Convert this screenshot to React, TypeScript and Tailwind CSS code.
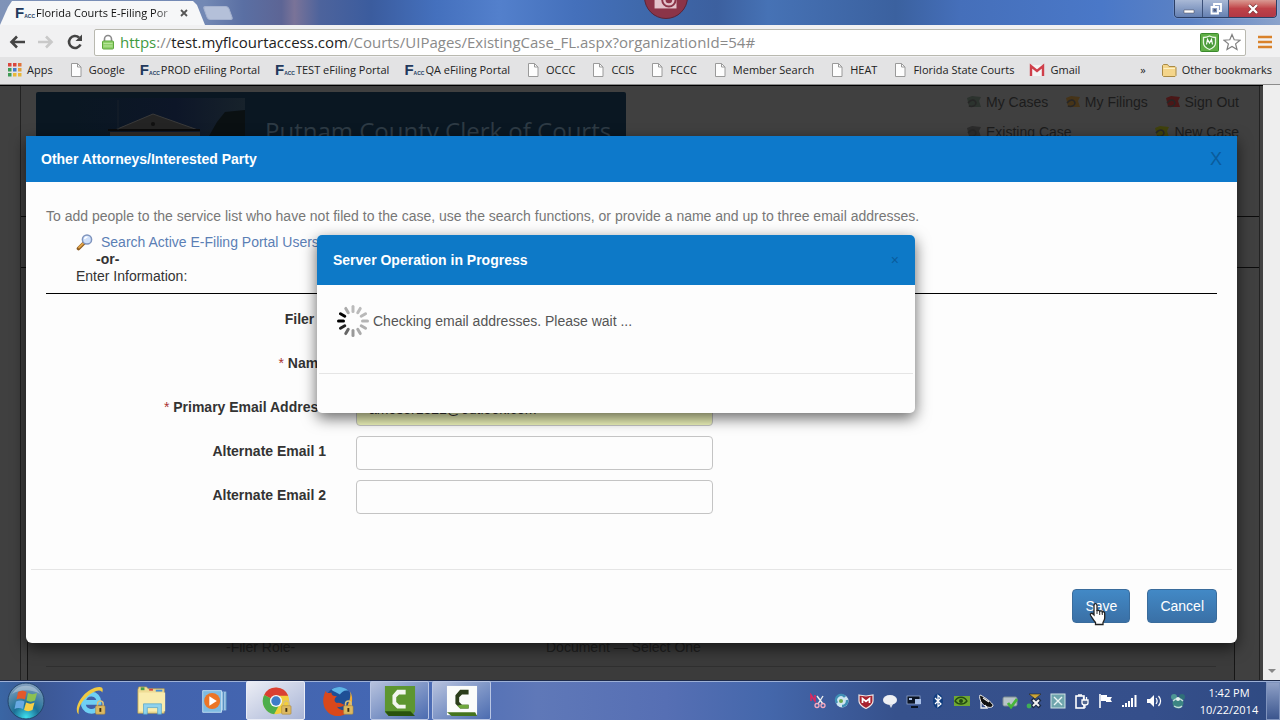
import type { ReactNode } from 'react';

const bookmarks = [
  ['apps', 'Apps'],
  ['file', 'Google'],
  ['facc', 'PROD eFiling Portal'],
  ['facc', 'TEST eFiling Portal'],
  ['facc', 'QA eFiling Portal'],
  ['file', 'OCCC'],
  ['file', 'CCIS'],
  ['file', 'FCCC'],
  ['file', 'Member Search'],
  ['file', 'HEAT'],
  ['file', 'Florida State Courts'],
  ['gmail', 'Gmail'],
];

const appDots = ['#d9453d', '#d9453d', '#e0723a', '#3f9b55', '#4278c9', '#e0a03a', '#3f9b55', '#e8b83a', '#e8b83a'];

function FaccLogo() {
  return (
    <span className="flex w-[21px] shrink-0 items-end font-['Liberation_Sans',sans-serif] font-bold text-[#22395c]">
      <span className="text-[15px] leading-4">F</span>
      <span className="text-[5px] leading-[9px]">ACC</span>
    </span>
  );
}

function BookmarkIcon({ kind }: { kind: string }) {
  if (kind === 'facc') return <FaccLogo />;
  if (kind === 'apps') {
    return (
      <svg className="mr-[5px] size-4 shrink-0" viewBox="0 0 16 16">
        {appDots.map((fill, i) => (
          <rect key={i} x={2 + (i % 3) * 5} y={1 + Math.floor(i / 3) * 5} width="3.500" height="3.500" fill={fill} />
        ))}
      </svg>
    );
  }
  if (kind === 'gmail') {
    return (
      <svg className="mr-[5px] size-4 shrink-0" viewBox="0 0 16 16">
        <path d="M1 3h14v11H1z" fill="#f4f4f4" />
        <path d="M2 14V4l6 5 6-5v10" fill="none" stroke="#cf3f4a" strokeWidth="2.400" />
      </svg>
    );
  }
  if (kind === 'folder') {
    return (
      <svg className="mr-[5px] size-4 shrink-0" viewBox="0 0 16 16">
        <path d="M1.500 13.500V3.500l1-1h4l1.500 2h6l1 1v8l-1 1h-11.500z" fill="#f4d58a" stroke="#a98a45" />
        <path d="M2.500 6.500h11.500" stroke="#fdf0c4" />
      </svg>
    );
  }
  return (
    <svg className="mr-[5px] size-4 shrink-0" viewBox="0 0 16 16">
      <path d="M3.500 1.500h6l3.500 3.500v9.500H3.500z" fill="#fdfdfd" stroke="#9a9a9a" />
      <path d="M9.500 1.500V5H13" fill="none" stroke="#9a9a9a" />
    </svg>
  );
}

function TitleBar() {
  return (
    <header className="relative flex h-[25px] items-end overflow-hidden bg-[linear-gradient(90deg,#7f93b8_0%,#7288b4_16%,#5a6fa3_19%,#5d6595_22%,#7a7398_23%,#4d639c_25%,#3b5c9e_29%,#4470bd_34%,#5380cc_39%,#4470bb_45%,#3f69ac_50%,#3c609f_56%,#4672b5_60%,#3b619f_70%,#456fba_75%,#4a78c8_86%,#5c82c4_93%,#8ba3cb_100%)]">
      <div className="flex h-6 w-[205px] items-center bg-[#f6f7f8] pl-[15px] [clip-path:polygon(0_100%,8px_6px,12px_0,193px_0,197px_4px,100%_100%)]">
        <FaccLogo />
        <span className="w-[140px] whitespace-nowrap bg-[linear-gradient(90deg,#111_85%,#11111130)] bg-clip-text text-[11px] leading-4 text-transparent">
          Florida Courts E-Filing Por
        </span>
        <button aria-label="Close tab" className="ml-1 shrink-0">
          <svg className="size-2" viewBox="0 0 8 8"><path d="M1 1l6 6M7 1L1 7" stroke="#555" strokeWidth="1.800" /></svg>
        </button>
      </div>
      <button aria-label="New tab" className="mb-[5px] h-[14px] w-[26px] skew-x-[20deg] rounded-[3px] border border-[#a5b2cf] bg-[#b4c0d9]" />
      <div className="absolute -top-[25px] left-[52%] size-11 -translate-x-1/2 rounded-full border border-[#5b2437] bg-[#8b3448]">
        <svg className="size-full" viewBox="0 0 44 44">
          <path d="M10 20h23v14H10z" fill="#e3c3cb" />
          <circle cx="25" cy="25" r="7" fill="#e3c3cb" stroke="#8b3448" strokeWidth="2" />
          <circle cx="25" cy="25" r="3.500" fill="#8b3448" />
        </svg>
      </div>
      <div className="ml-auto mr-[3px] flex h-[18px] self-start overflow-hidden rounded-b-[4px] border border-t-0 border-[#2b3f66] text-white shadow-[0_0_1px_#fff]">
        <button aria-label="Minimize" className="flex w-7 items-center justify-center border-r border-[#3b5078] bg-linear-to-b from-[#a9b9d6] to-[#6580b2]">
          <svg className="h-3 w-3" viewBox="0 0 12 12"><path d="M1 7h10v3H1z" fill="#fff" stroke="#445" strokeWidth=".5" /></svg>
        </button>
        <button aria-label="Restore" className="flex w-[26px] items-center justify-center border-r border-[#3b5078] bg-linear-to-b from-[#a9b9d6] to-[#6580b2]">
          <svg className="h-3 w-3" viewBox="0 0 12 12" fill="none"><path d="M4 3V1h7v7H9M1.500 4h6.500v6.500H1.500z" stroke="#fff" strokeWidth="1.800" /><path d="M4 6.500h1.500v1.500H4z" stroke="#334" strokeWidth=".6" /></svg>
        </button>
        <button aria-label="Close" className="flex w-[47px] items-center justify-center bg-linear-to-b from-[#d99a93] via-[#bf4248] to-[#b03844]">
          <svg className="h-3 w-3" viewBox="0 0 12 12"><path d="M2 2l8 8M10 2l-8 8" stroke="#733" strokeWidth="3.500" /><path d="M2 2l8 8M10 2l-8 8" stroke="#fff" strokeWidth="2.400" /></svg>
        </button>
      </div>
    </header>
  );
}

function Toolbar() {
  return (
    <div className="flex h-8 items-center bg-[#f1f1f2] px-2 pt-[2px]">
      <button aria-label="Back" className="mr-[11px]">
        <svg className="size-[18px]" viewBox="0 0 18 18" fill="none" stroke="#444" strokeWidth="2.600"><path d="M17 9H4M9 3.500L3.500 9 9 14.500" /></svg>
      </button>
      <button aria-label="Forward" className="mr-[11px]">
        <svg className="size-[18px]" viewBox="0 0 18 18" fill="none" stroke="#c9c9c9" strokeWidth="2.600"><path d="M1 9h13M9 3.500L14.500 9 9 14.500" /></svg>
      </button>
      <button aria-label="Reload" className="mr-[10px]">
        <svg className="size-[18px]" viewBox="0 0 18 18"><path d="M14.500 11.500A6 6 0 1 1 13 4.500" fill="none" stroke="#444" strokeWidth="2.600" /><path d="M16 1.500v6.500H9.500z" fill="#444" /></svg>
      </button>
      <div className="flex h-[27px] flex-1 items-center rounded-[2px] border border-[#b9b9b0] bg-white pl-[5px] pr-1">
        <svg className="mr-1 h-4 w-4 shrink-0" viewBox="0 0 16 16">
          <path d="M4.500 8V5a3.500 3.500 0 0 1 7 0v3" fill="none" stroke="#8a8a8a" strokeWidth="1.600" />
          <rect x="2.500" y="7" width="11" height="8" rx="1" fill="#8fd06a" stroke="#5da83c" />
          <path d="M3.500 9.500h9M3.500 12h9" stroke="#b7e69b" />
        </svg>
        <span className="whitespace-nowrap text-[15px] leading-5 text-[#8a8a8a]">
          <span className="text-[#3f9a3f]">https</span>://<span className="text-[#222]">test.myflcourtaccess.com</span>/Courts/UIPages/ExistingCase_FL.aspx?organizationId=54#
        </span>
        <svg className="ml-auto size-[19px] shrink-0" viewBox="0 0 19 19">
          <rect x=".5" y=".5" width="18" height="18" rx="1" fill="#5fae45" stroke="#3a8a2c" />
          <path d="M3.500 4.500c2 0 4-.5 6-1.500 2 1 4 1.500 6 1.500V10c0 3-2.500 5-6 6.500C6 15 3.500 13 3.500 10z" fill="#4a9a3a" stroke="#e9f7e4" strokeWidth="1.300" />
          <path d="M6.500 11.500l1-5 2 3.500 2-3.500 1 5" fill="none" stroke="#fff" strokeWidth="1.200" />
        </svg>
        <svg className="ml-1 size-[18px] shrink-0" viewBox="0 0 18 18"><path d="M9 1.500l2.200 5.300 5.800.4-4.400 3.700 1.400 5.600L9 13.500l-5 3 1.400-5.600L1 7.200l5.800-.4z" fill="#fff" stroke="#808080" strokeWidth="1.200" /></svg>
      </div>
      <button aria-label="Menu" className="ml-3">
        <svg className="h-[14px] w-[14px]" viewBox="0 0 14 14"><path d="M0 2h14M0 7h14M0 12h14" stroke="#d9822b" strokeWidth="2.600" /></svg>
      </button>
    </div>
  );
}

function BookmarksBar() {
  return (
    <nav className="flex h-7 items-center gap-[15px] whitespace-nowrap border-b border-[#8c8c8c] bg-[#e3e3e4] pb-px pl-[6px] pr-2 text-[11px] leading-4 text-[#222]">
      {bookmarks.map(([kind, label]) => (
        <a href="#" className="flex items-center" key={label}>
          <BookmarkIcon kind={kind} />
          {label}
        </a>
      ))}
      <button className="ml-auto">»</button>
      <a href="#" className="flex items-center">
        <BookmarkIcon kind="folder" />
        Other bookmarks
      </a>
    </nav>
  );
}

function DimLink({ children, color }: { children: ReactNode; color: string }) {
  return (
    <a href="#" className="flex items-center gap-1">
      <svg className="size-4" viewBox="0 0 16 16">
        <path d="M1 4l5-2 9 1-2 4 2 6H3l-1-5z" fill={color} />
        <path d="M2 9c3-4 7-4 8 0 0 3-4 4-7 3" fill="none" stroke="#262626" strokeWidth="1.500" />
      </svg>
      {children}
    </a>
  );
}

function CourtPage() {
  return (
    <div className="ml-5 mr-[3px] flex h-full flex-col border-x border-[#222] font-['Liberation_Sans',Arial,sans-serif] text-sm leading-5 text-[#1c1c1c]">
      <div className="flex h-[131px] items-start justify-between border-b border-[#0c0c0c] pl-[15px] pr-5 pt-[6px]">
        <div className="flex h-[80px] w-[590px] rounded-[2px] bg-[#0a1722]">
          <svg className="h-[80px] w-[229px] shrink-0" viewBox="0 0 229 80">
            <defs>
              <linearGradient id="dusk">
                <stop offset="0" stopColor="#0a1722" />
                <stop offset=".6" stopColor="#0d1628" />
                <stop offset="1" stopColor="#17222b" />
              </linearGradient>
            </defs>
            <path d="M36 6h173v74H36z" fill="url(#dusk)" />
            <path d="M209 18l-20 2-8 10-8 14v36h36z" fill="#0a1012" />
            <path d="M79 38l38-16 45 16z" fill="#242424" stroke="#3a3a3a" />
            <path d="M74 40h90v40H74z" fill="#2e2a27" />
            <path d="M72 38h92" stroke="#0a0a0a" strokeWidth="2" />
            <circle cx="117" cy="32" r="2" fill="#111" />
            <path d="M82 8v30" stroke="#18202a" />
          </svg>
          <h1 className="pt-[23px] font-['Open_Sans',sans-serif] text-2xl leading-8 text-[#2e3b45]">Putnam County Clerk of Courts</h1>
        </div>
        <div className="w-[273px]">
          <nav className="flex justify-between">
            <DimLink color="#2c332e">My Cases</DimLink>
            <DimLink color="#463418">My Filings</DimLink>
            <DimLink color="#4a1717">Sign Out</DimLink>
          </nav>
          <nav className="mt-[10px] flex justify-between">
            <DimLink color="#2c2c2c">Existing Case</DimLink>
            <DimLink color="#40420c">New Case</DimLink>
          </nav>
        </div>
      </div>
      <div className="h-[51px] border-b border-[#0c0c0c]" />
      <div className="ml-[6px] mr-6 flex flex-1 flex-col justify-end border-x border-[#161616] bg-[#3b3b3b]">
        <div className="mx-[18px] flex h-[30px] border-b border-[#2f2f2f] pl-[180px] text-[#202020]">
          <span className="w-[320px]">-Filer Role-</span>
          <span>Document — Select One</span>
        </div>
        <div className="h-[13px]" />
      </div>
    </div>
  );
}

function Field({ label, id, required, children }: { label: string; id: string; required?: boolean; children: ReactNode }) {
  return (
    <div className="flex h-[34px] gap-[30px]">
      <label htmlFor={id} className="w-[280px] pt-[5px] text-right font-bold text-[#333]">
        {required && <span className="font-normal text-[#a33]">* </span>}
        {label}
      </label>
      {children}
    </div>
  );
}

const inputClass = 'h-[34px] w-[357px] rounded-[4px] border border-[#c4c4c4] px-3 text-[#333] outline-none';

function PartyDialog() {
  return (
    <section className="absolute inset-x-[26px] top-[50px] rounded-b-[6px] bg-[#fdfdfd] text-sm leading-5 shadow-[0_5px_15px_rgba(0,0,0,0.6)]">
      <div className="flex h-[46px] items-center justify-between bg-[#0d79cb] px-[15px]">
        <h2 className="font-bold text-white">Other Attorneys/Interested Party</h2>
        <button aria-label="Close dialog" className="text-lg leading-6 text-[#0a5c9c]">X</button>
      </div>
      <div className="px-5 pb-[55px] pt-6">
        <p className="text-[#777]">To add people to the service list who have not filed to the case, use the search functions, or provide a name and up to three email addresses.</p>
        <div className="mt-2 pl-[30px] leading-[17px] text-[#333]">
          <a href="#" className="flex items-center gap-2 text-[#5b7fb5]">
            <svg className="size-[17px]" viewBox="0 0 17 17">
              <path d="M8 9l-5.500 5.500" stroke="#8a5a20" strokeWidth="3.600" strokeLinecap="round" />
              <path d="M7.500 9L3 13.500" stroke="#e3a548" strokeWidth="1.800" strokeLinecap="round" />
              <circle cx="11" cy="5.500" r="4.600" fill="#cfe0fa" stroke="#7f94bd" strokeWidth="1.500" />
              <path d="M8.500 5a3 3 0 0 1 3-2" fill="none" stroke="#fff" strokeWidth="1.400" />
            </svg>
            Search Active E-Filing Portal Users
          </a>
          <p className="pl-5 font-bold">-or-</p>
          <p>Enter Information:</p>
        </div>
        <form className="mt-2 space-y-[10px] border-t border-black pt-[10px]">
          <Field label="Filer #" id="filer"><select id="filer" className={inputClass} /></Field>
          <Field label="Name" id="name" required><input id="name" className={inputClass} /></Field>
          <Field label="Primary Email Address" id="email" required>
            <input id="email" defaultValue="amoser1321@outlook.com" className={`${inputClass} bg-[#f1f7bd]`} />
          </Field>
          <Field label="Alternate Email 1" id="alt1"><input id="alt1" className={inputClass} /></Field>
          <Field label="Alternate Email 2" id="alt2"><input id="alt2" className={inputClass} /></Field>
        </form>
      </div>
      <div className="mx-[5px] flex justify-end gap-[17px] border-t border-[#e5e5e5] px-[15px] pb-5 pt-[19px] text-white">
        <button className="relative h-[34px] rounded-[4px] border border-[#3a6c9c] bg-linear-to-b from-[#4289c6] to-[#3a70a6] px-3">
          Save
          <svg className="absolute left-4 top-[12px] h-6 w-[18px]" viewBox="0 0 18 24">
            <path d="M5 13V3.500C5 1 8 1 8 3.500V9c.5-1 2.500-1 2.700.5.700-1 2.500-.8 2.600.7.800-.8 2.400-.4 2.400 1.300V16c0 2-1.200 3-1.700 4.500V22.500H6.500V20.500C4.500 18 3 15.500 1.600 13.500c-1-2 1.200-3 2.400-1.500z" fill="#fff" stroke="#222" strokeWidth="1.300" />
            <path d="M8 8v4M10.700 9.500V13M13.300 10.500V13" stroke="#333" />
          </svg>
        </button>
        <button className="h-[34px] rounded-[4px] border border-[#3a6c9c] bg-linear-to-b from-[#4289c6] to-[#3a70a6] px-3">Cancel</button>
      </div>
    </section>
  );
}

const spokes = ['#bbb', '#bbb', '#b8b8b8', '#b5b5b5', '#b0b0b0', '#aaa', '#999', '#666', '#222', '#000', '#000', '#aaa'];

function ProgressDialog() {
  return (
    <div className="pointer-events-none absolute inset-x-0 top-[149px] flex justify-center pr-[31px]">
      <section className="w-[598px] overflow-hidden rounded-[5px] bg-[#fdfdfd] text-sm leading-5 shadow-[0_5px_15px_rgba(0,0,0,0.6)]">
        <div className="flex h-[50px] items-center justify-between bg-[#0d79c7] px-4">
          <h2 className="font-bold text-white">Server Operation in Progress</h2>
          <button aria-label="Close progress" className="text-[#0a5c9c]">×</button>
        </div>
        <div className="flex h-[88px] items-start gap-1 px-5 pt-5">
          <svg className="size-8" viewBox="-16 -16 32 32">
            {spokes.map((stroke, i) => (
              <path key={i} d="M0-9.500V-14.500" stroke={stroke} strokeWidth="3" strokeLinecap="round" transform={`rotate(${i * 30})`} />
            ))}
          </svg>
          <p className="pt-[6px] text-[#555]">Checking email addresses. Please wait ...</p>
        </div>
        <div className="mx-[2px] h-10 border-t border-[#e5e5e5]" />
      </section>
    </div>
  );
}

function Lock() {
  return (
    <g>
      <path d="M25 23v-3a3 3 0 0 1 6 0v3" fill="none" stroke="#d8c07a" strokeWidth="1.600" />
      <rect x="23" y="22" width="10" height="9" rx="1" fill="#dcb962" stroke="#a5843a" strokeWidth=".6" />
      <path d="M28 24.500v4" stroke="#3c2d10" strokeWidth="2" />
    </g>
  );
}

function TaskTile({ label, tile, children }: { label: string; tile?: 'active' | 'open'; children: ReactNode }) {
  const look =
    tile === 'active'
      ? 'border-[#e8ecf6] bg-linear-to-br from-[#eceef5] to-[#a9b5d6]'
      : tile === 'open'
        ? 'border-[#b9c6e4] bg-linear-to-br from-[#b7c2dd] to-[#4c6cb0]'
        : 'border-transparent';
  return (
    <button aria-label={label} className={`flex h-[39px] w-[59px] items-center justify-center rounded-[2px] border ${look}`}>
      <svg className="size-8" viewBox="0 0 34 34">{children}</svg>
    </button>
  );
}

const trayIcons: [string, ReactNode][] = [
  ['Snip', <><path d="M1 8V2l4 6V2" fill="none" stroke="#e3265c" strokeWidth="1.500" /><path d="M7 3l6 8M13 3l-5 8" stroke="#eee" strokeWidth="1.400" /><circle cx="7" cy="12.500" r="2" fill="none" stroke="#f6a9bf" strokeWidth="1.300" /><circle cx="13" cy="12.500" r="2" fill="none" stroke="#f6a9bf" strokeWidth="1.300" /></>],
  ['Sync', <><circle cx="8" cy="8" r="6.500" fill="#cfe6f1" /><path d="M3 10a5 5 0 0 1 8-6M13 7a5 5 0 0 1-5 6" fill="none" stroke="#3f8fb5" strokeWidth="2.500" /><circle cx="7" cy="8" r="2" fill="#6aa84f" /></>],
  ['Shield', <><path d="M1 2l7 1 7-1v6c0 4-4 6-7 7.500C5 14 1 12 1 8z" fill="#a8222f" stroke="#f0e6e6" strokeWidth="1.200" /><path d="M4.500 10V5.500l3.500 3 3.500-3V10" fill="none" stroke="#fff" strokeWidth="1.700" /></>],
  ['Chat', <><ellipse cx="8" cy="7" rx="7" ry="5" fill="#eef0f4" /><path d="M7 11l2 4 2-4z" fill="#d9dde6" /></>],
  ['Display', <><rect x="1" y="3" width="13" height="8" fill="#0b1424" stroke="#8fa4cc" strokeWidth=".8" /><path d="M3 5h3v2H3zM9 6h6v5H9z" fill="#a9c0e8" /><path d="M5 14h7" stroke="#0b1424" strokeWidth="2" /></>],
  ['Bluetooth', <><ellipse cx="8" cy="8" rx="5" ry="7.500" fill="#123e80" /><path d="M5 5l6 6-3 2.500V2.500L11 5l-6 6" fill="none" stroke="#fff" strokeWidth="1.200" /></>],
  ['Graphics', <><rect x="0" y="3" width="16" height="10" fill="#6fa832" /><path d="M1 8c3-5 9-5 12 0-3 4-9 4-12 0z" fill="none" stroke="#234a12" strokeWidth="1.300" /><circle cx="7" cy="8" r="2" fill="#234a12" /></>],
  ['Satellite', <><path d="M2 2c1 0 14 8 13 11-2 3-9 1-12-4-1-3-2-5-1-7z" fill="#111" stroke="#eee" /><path d="M5 5l6 4M3 9v6h6l-2-3" stroke="#eee" strokeWidth="1.300" fill="none" /></>],
  ['Drive', <><rect x="1" y="4" width="14" height="9" rx="1.500" fill="#b8c4c8" stroke="#7d8c92" /><path d="M6 10l3 4 6-8" fill="none" stroke="#47b53a" strokeWidth="2.800" /></>],
  ['Wireless off', <><path d="M3 1h12l-6 5z" fill="#c9a438" stroke="#222" strokeWidth=".6" /><path d="M6 6l8 8M14 6l-8 8" stroke="#1b2a44" strokeWidth="4" /><path d="M7 7l6 6M13 7l-6 6" stroke="#f2f2f2" strokeWidth="2" /><circle cx="3" cy="13" r="2.400" fill="#3fae55" /></>],
  ['Box', <><rect x="1" y="1" width="14" height="14" fill="#6fa5ad" stroke="#cfe2e4" /><path d="M4 4l8 8M12 4l-8 8" stroke="#e9f4f4" strokeWidth="1.400" /></>],
  ['Power', <><rect x="2" y="3" width="8" height="12" fill="none" stroke="#fff" strokeWidth="1.600" /><path d="M4 2h4M8 7h6v3c0 1-1 2-3 2s-3-1-3-2zM9.500 4v3M12.500 4v3M11 12v3" stroke="#fff" strokeWidth="1.300" fill="#53688f" /></>],
  ['Action center', <><path d="M2 1v14" stroke="#fff" strokeWidth="1.600" /><path d="M3 2h6v2h5l-1.500 2.500L14 9H8V8H3z" fill="#fff" /></>],
  ['Network', <path d="M1 14v-2M4 14v-4M7 14V8M10 14V5M13.500 14V2" stroke="#fff" strokeWidth="2" />],
  ['Volume', <><path d="M1 6h3l4-4v12l-4-4H1z" fill="#fff" /><path d="M10 5c1.500 2 1.500 4 0 6M12.500 3c2.500 3 2.500 7 0 10" fill="none" stroke="#fff" strokeWidth="1.200" /></>],
  ['Globe', <><circle cx="8" cy="10" r="5.500" fill="#3c8583" /><circle cx="4" cy="4" r="3" fill="#4d9694" /><circle cx="12" cy="4" r="3" fill="#2f6f78" /><path d="M3 8c3-3 7-3 10 0M4 13c3 2 6 2 8 0" fill="none" stroke="#c2dcd9" strokeWidth="1.500" /><circle cx="8" cy="6" r="2" fill="#e5efee" /></>],
];

function Taskbar() {
  return (
    <footer className="flex h-10 items-center border-t border-[#1d2a4a] bg-[linear-gradient(90deg,#3a66a4_0%,#3b5794_3%,#4262ac_8%,#4467b3_30%,#5f78b8_42%,#566fb4_52%,#4467ab_60%,#36518c_70%,#354f8b_90%,#2f4a82_100%)] shadow-[inset_0_1px_0_#9db0d6]">
      <button aria-label="Start" className="ml-[7px] mr-[15px]">
        <svg className="size-[38px]" viewBox="0 0 38 38">
          <defs>
            <radialGradient id="orb" cx=".5" cy=".95" r=".9">
              <stop offset="0" stopColor="#3fe0ee" />
              <stop offset=".4" stopColor="#1c7096" />
              <stop offset="1" stopColor="#7d9cbc" />
            </radialGradient>
          </defs>
          <circle cx="19" cy="19" r="18" fill="url(#orb)" stroke="#23456c" />
          <path d="M11 10c3-2 6-2 8.500 0L18 17.500c-3-1.500-6-1.500-8.500 0z" fill="#e2592b" />
          <path d="M21 11c3 1.500 6 1.500 9 0l-2 7.500c-3 1.500-6 1.500-8.500 0z" fill="#8cc152" />
          <path d="M9 19.500c3-1.500 6-1.500 8.500 0L16 27c-3-1.500-6-1.500-8.500 0z" fill="#68a9e3" />
          <path d="M19 20.500c3 1.500 6 1.500 8.500 0l-2 7.500c-3 1.500-6 1.500-8.500 0z" fill="#f7cf46" />
          <path d="M5 12a16 16 0 0 1 28 0c-8-5-20-5-28 0z" fill="#fff" opacity=".3" />
        </svg>
      </button>
      <div className="flex flex-1 gap-[3px]">
        <TaskTile label="Internet Explorer">
          <path d="M11 18.500h15.500c0-11-14.500-12-16.500-1-1.500 11 12 14 16 6" fill="none" stroke="#6fd0f4" strokeWidth="5" />
          <path d="M5 31C-2 26 10 3 27 2c4 0 4 3 3 6-1-3-5-3-10 0C9 14 4 24 5 31z" fill="#f0ca42" />
          <Lock />
        </TaskTile>
        <TaskTile label="Explorer">
          <path d="M2 5l1-3h8l2 2h17v26H2z" fill="#efdc94" stroke="#b99e4c" strokeWidth=".7" />
          <path d="M5 4h4" stroke="#4a9b49" strokeWidth="3" />
          <path d="M14 5h4" stroke="#d8453a" strokeWidth="2" />
          <path d="M21 6h7" stroke="#4a8fd0" strokeWidth="2" />
          <path d="M3 8h28v20H3z" fill="#f9ecae" />
          <path d="M8 31V20h19v11h-4v-7H12v7z" fill="#8fd2ee" stroke="#4b9fc6" strokeWidth=".7" />
        </TaskTile>
        <TaskTile label="Media Player">
          <path d="M10 7h20v20H10z" fill="#9fc5e4" />
          <path d="M27 7v20M30 8v18" stroke="#4d88bd" />
          <path d="M5 6h20v23H5z" fill="#7ebbe2" stroke="#c0def2" />
          <circle cx="15" cy="17" r="8.500" fill="#ec7526" />
          <path d="M12 12l8 5-8 5z" fill="#fff" />
        </TaskTile>
        <TaskTile label="Chrome" tile="active">
          <circle cx="17" cy="17" r="14" fill="#f3cf3c" />
          <path d="M17 17L4.500 10.500A14 14 0 0 1 30 11.500H17z" fill="#da3f32" />
          <path d="M17 17L4.500 10.500A14 14 0 0 0 15 31l6-11z" fill="#4dae4c" />
          <circle cx="17" cy="17" r="6.500" fill="#f5f6f8" />
          <circle cx="17" cy="17" r="5" fill="#3d7cc9" />
          <Lock />
        </TaskTile>
        <TaskTile label="Firefox">
          <circle cx="18" cy="16" r="14" fill="#1f4f96" />
          <path d="M10 5c5-4 13-4 18 1-4-1-7 1-9 4-3-2-7-3-9-5z" fill="#5fb4e6" />
          <path d="M4 6c-5 10-3 20 5 25 8 4 17 2 21-6-5 3-12 2-14-2 3 1 6 0 8-2-3-1-5-3-8-2-4-1-3-5 0-7-4 0-6-1-6-4-3 1-5 1-6-2z" fill="#d9481c" />
          <path d="M30 7c4 8 2 16-4 20 1-7 5-11 4-20z" fill="#f3ad33" />
          <Lock />
        </TaskTile>
        <TaskTile label="Camtasia Studio" tile="open">
          <path d="M1 1h32v27l-3 5H5l-4-4z" fill="#5d9630" />
          <path d="M1 28h27l5 5H5z" fill="#29520e" />
          <path d="M23 5v5h-7l-3 3v5l3 3h7v4h-9l-5-5V11l5-6z" fill="#f3f6ef" />
        </TaskTile>
        <TaskTile label="Camtasia Recorder" tile="open">
          <path d="M1 1h32v31H1z" fill="#fbfcfa" />
          <path d="M1 29h30l2 4H6z" fill="#44731d" />
          <path d="M24 5v5h-7l-3 3v5l3 3h7v4h-9l-5-5V11l5-6z" fill="#2b3d1a" />
          <path d="M24 21v4h-9l-3-3 4-1z" fill="#6fa83c" />
        </TaskTile>
      </div>
      <div className="flex items-center gap-2 pt-px">
        {trayIcons.map(([label, icon]) => (
          <svg key={label} aria-label={label} className="size-4" viewBox="0 0 16 16">{icon}</svg>
        ))}
      </div>
      <div className="ml-[6px] w-[74px] text-center text-[11px] leading-[17px] text-white">
        <p>1:42 PM</p>
        <p>10/22/2014</p>
      </div>
      <button aria-label="Show desktop" className="h-[38px] w-[14px] border border-[#7f93bd] bg-linear-to-b from-[#8fa0c6] to-[#3c568e]" />
    </footer>
  );
}

export default function App() {
  return (
    <div className="flex h-screen flex-col overflow-hidden bg-[#e3e3e4] font-['Open_Sans','Noto_Sans',sans-serif]">
      <TitleBar />
      <Toolbar />
      <BookmarksBar />
      <div className="flex min-h-0 flex-1">
        <main className="relative min-w-0 flex-1 overflow-hidden border-t border-black bg-[#404040] font-['Liberation_Sans',Arial,sans-serif]">
          <CourtPage />
          <PartyDialog />
          <ProgressDialog />
        </main>
        <div className="flex w-[17px] items-end justify-center bg-[#eeeeee] pb-[7px]">
          <svg className="h-1 w-2" viewBox="0 0 8 4"><path d="M0 0h8L4 4z" fill="#888" /></svg>
        </div>
      </div>
      <Taskbar />
    </div>
  );
}
